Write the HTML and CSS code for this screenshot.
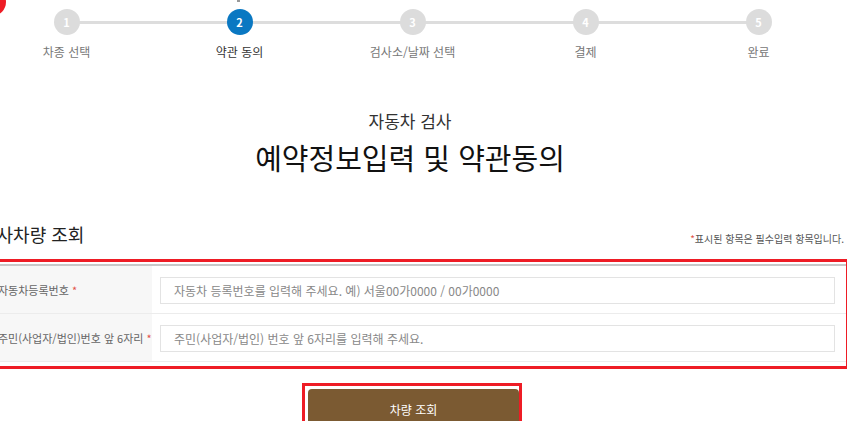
FILE: index.html
```html
<!DOCTYPE html>
<html lang="ko">
<head>
    <meta charset="UTF-8">
    <meta name="viewport" content="width=device-width, initial-scale=1.0">
    <title>자동차 검사 - 예약정보입력 및 약관동의</title>
    <link rel="stylesheet" href="styles.css">
</head>
<body>

    <!-- 표시용 마커 -->
    <div class="marker"></div>
    <div class="tick"></div>

    <div class="wrap">

        <!-- 단계 표시 -->
        <ol class="steps">
            <li class="step"><span class="num">1</span><span class="label">차종 선택</span></li>
            <li class="step active"><span class="num">2</span><span class="label">약관 동의</span></li>
            <li class="step"><span class="num">3</span><span class="label">검사소/날짜 선택</span></li>
            <li class="step"><span class="num">4</span><span class="label">결제</span></li>
            <li class="step"><span class="num">5</span><span class="label">완료</span></li>
        </ol>

        <!-- 페이지 제목 -->
        <div class="page-title">
            <p class="sub">자동차 검사</p>
            <h1>예약정보입력 및 약관동의</h1>
        </div>

        <!-- 검사차량 조회 -->
        <div class="section-head">
            <h2>검사차량 조회</h2>
            <p class="note"><em>*</em>표시된 항목은 필수입력 항목입니다.</p>
        </div>

        <div class="highlight">
            <div class="form-table">
                <div class="row">
                    <div class="th"><span>자동차등록번호 <em>*</em></span></div>
                    <div class="td"><input type="text" placeholder="자동차 등록번호를 입력해 주세요. 예) 서울00가0000 / 00가0000"></div>
                </div>
                <div class="row">
                    <div class="th"><span>주민(사업자/법인)번호 앞 6자리 <em>*</em></span></div>
                    <div class="td"><input type="text" placeholder="주민(사업자/법인) 번호 앞 6자리를 입력해 주세요."></div>
                </div>
            </div>
        </div>

        <div class="btn-area">
            <div class="btn-outline">
                <button class="btn-search">차량 조회</button>
            </div>
        </div>

    </div>

</body>
</html>
```

FILE: styles.css
```css
* {
    margin: 0;
    padding: 0;
    box-sizing: border-box;
}

html, body {
    overflow: hidden;
    background: #fff;
    font-family: "Noto Sans CJK KR", "Noto Sans", sans-serif;
    color: #333;
}

/* 좌측 상단 빨간 마커 */
.marker {
    position: absolute;
    left: -22px;
    top: -12px;
    width: 28px;
    height: 28px;
    border-radius: 50%;
    background: #ee1c25;
}

.tick {
    position: absolute;
    left: 237px;
    top: 0;
    width: 3px;
    height: 2px;
    background: #999;
}

.wrap {
    width: 866px;
    margin-left: -20px;
}

/* 단계 */
.steps {
    list-style: none;
    display: grid;
    grid-template-columns: repeat(5, 173px);
    padding-top: 9px;
    position: relative;
}

.steps::before {
    content: "";
    position: absolute;
    left: 86px;
    right: 94px;
    top: 21px;
    height: 3px;
    background: #ddd;
}

.step {
    display: flex;
    flex-direction: column;
    align-items: center;
    position: relative;
}

.step .num {
    width: 26px;
    height: 26px;
    border-radius: 50%;
    background: #dcdcdc;
    color: #fff;
    font-size: 11px;
    font-weight: bold;
    line-height: 26px;
    text-align: center;
}

.step .label {
    margin-top: 8px;
    font-size: 12px;
    color: #777;
    line-height: 18px;
}

.step.active .num {
    background: #0a78c2;
}

.step.active .label {
    color: #333;
}

/* 제목 */
.page-title {
    text-align: center;
    padding-top: 48px;
    margin-right: 6px;
}

.page-title .sub {
    font-size: 17px;
    line-height: 24px;
    color: #333;
}

.page-title h1 {
    font-size: 29px;
    font-weight: normal;
    line-height: 40px;
    color: #111;
    margin-top: 4px;
}

.section-head {
    display: flex;
    justify-content: space-between;
    align-items: flex-end;
    margin-top: 44px;
    padding-right: 2px;
}

.section-head h2 {
    font-size: 18px;
    font-weight: normal;
    line-height: 26px;
    color: #222;
}

.note {
    font-size: 10px;
    color: #555;
    line-height: 14px;
    margin-bottom: 1px;
}

.note em, .th em {
    font-style: normal;
    color: #e2534a;
}

/* 입력 테이블 */
.highlight {
    border: 3px solid #ee1c25;
    margin: 12px -3px 0 -3px;
    padding: 2px 0 4px 0;
}

.form-table {
    border-top: 2px solid #c8c8c8;
}

.row {
    display: flex;
    border-bottom: 1px solid #ececec;
    height: 48px;
}

.th {
    width: 172px;
    background: #f7f7f7;
    font-size: 11px;
    color: #666;
    padding-left: 18px;
    display: flex;
    align-items: center;
}

.td {
    flex: 1;
    padding: 11px 11px 0 8px;
}

.td input {
    width: 100%;
    height: 27px;
    border: 1px solid #e3e3e3;
    padding: 0 13px;
    font-family: inherit;
    font-size: 12px;
    color: #333;
}

.td input::placeholder {
    color: #888;
}

/* 버튼 */
.btn-area {
    display: flex;
    justify-content: center;
    margin-top: 14px;
    padding-right: 2px;
}

.btn-outline {
    border: 3px solid #ee1c25;
    padding: 3px 0 0 3px;
}

.btn-search {
    display: block;
    width: 211px;
    height: 40px;
    border: none;
    border-radius: 4px;
    background: #7b5a32;
    color: #fff;
    font-family: inherit;
    font-size: 12px;
    cursor: pointer;
}
```
